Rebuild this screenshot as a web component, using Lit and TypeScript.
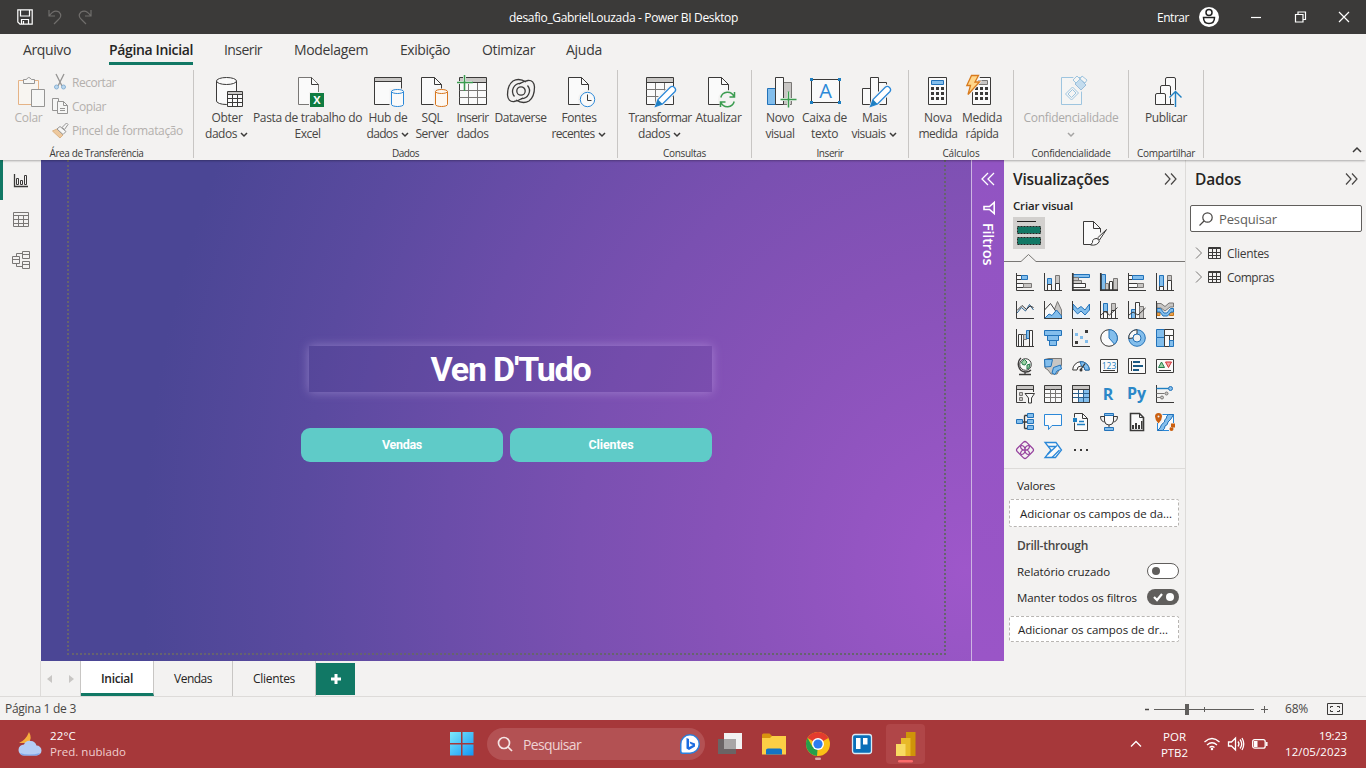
import { LitElement, html, svg, css } from "lit";
import { customElement, property } from "lit/decorators.js";

/** A run of text whose tracking is adjusted so that it takes `w` pixels. */
@customElement("fit-text")
class FitText extends LitElement {
  @property() t = "";
  @property({ type: Number }) w = 0;
  static styles = css`
    :host { display: inline-block; white-space: pre; }
  `;
  render() { return html`<span>${this.t}</span>`; }
  updated() {
    const s = this.renderRoot.querySelector("span") as HTMLElement;
    s.style.letterSpacing = "0px";
    const n = s.getBoundingClientRect().width;
    if (this.w) s.style.letterSpacing = (this.w - n) / this.t.length + "px";
  }
}

const T = (t: string, w: number, c = "") => html`<fit-text class=${c} .t=${t} .w=${w}></fit-text>`;
const R = (x: number, y: number, w: number, h: number) => `M${x} ${y}h${w}v${h}h${-w}z`;
const C = (x: number, y: number, r: number) => `M${x - r} ${y}a${r} ${r} 0 1 0 ${2 * r} 0a${r} ${r} 0 1 0 ${-2 * r} 0z`;

type Shape = [string, string];
const draw = (shapes: Shape[]) => shapes.map(([c, d]) => svg`<path class=${c} d=${d}></path>`);
const ico = (w: number, h: number, shapes: Shape[], extra: unknown = "") =>
  html`<svg width=${w} height=${h} viewBox="0 0 ${w} ${h}">${draw(shapes)}${extra}</svg>`;

const FILE: Shape = ["w", "M5.5 4.5H18.5L25.5 11.5V31.5H5.5z"];
const FOLD: Shape = ["d", "M18.5 4.5V11.5H25.5"];
const cyl = (c: string, x: number, y: number, w: number, h: number, ry: number): Shape[] => [
  [c, `M${x} ${y + ry}V${y + h - ry}A${w / 2} ${ry} 0 0 0 ${x + w} ${y + h - ry}V${y + ry}`],
  [c, `M${x} ${y + ry}A${w / 2} ${ry} 0 0 1 ${x + w} ${y + ry}A${w / 2} ${ry} 0 0 1 ${x} ${y + ry}z`],
];
const PENCIL: Shape[] = [
  ["halo", "M12 33L14 26L27 13L32 18L19 31z"],
  ["pb", "M11.5 33.5L14 26.5L26.5 14Q28.5 12.5 30.5 14.5Q32.5 16.5 31 18.5L18.5 31z"],
  ["bf", "M11.5 33.5L14 26.5L18.5 31z"],
];
const dots = (x: number, y: number) =>
  [0, 1, 2].flatMap((i) => [0, 1, 2].map((j) => R(x + i * 5, y + j * 5, 3, 3))).join("");

const RI: Record<string, unknown> = {
  obter: ico(32, 36, [...cyl("w", 5.5, 4.5, 20, 27, 3.5), ["halo", R(17.5, 19.5, 13, 13)], ["w", R(16.5, 18.5, 15, 15)], ["gf", R(17, 19, 14, 2)], ["d", "M16.5 21.5h15M16.5 25.5h15M16.5 29.5h15M21.5 21.5v12M26.5 21.5v12"]]),
  excel: ico(32, 36, [["wg", "M6.5 4.5H19.5L26.5 11.5V31.5H6.5z"], ["d", "M19.5 4.5V11.5H26.5"], ["halo", R(18.5, 20.5, 13, 13)], ["xl", R(18, 20, 14, 14)]], svg`<text class="xt" x="25" y="31">X</text>`),
  hub: ico(32, 36, [["w", R(2.5, 4.5, 27, 27)], ["gf", R(3, 5, 26, 3)], ["d", "M2.5 8.5h27"], ["halo", R(19, 17, 13, 18)], ...cyl("bl", 19.5, 16.5, 12, 17, 2)]),
  sql: ico(32, 36, [FILE, FOLD, ["halo", R(19, 17, 13, 18)], ...cyl("or", 19.5, 16.5, 12, 17, 2)]),
  inserir: ico(32, 36, [["w", R(2.5, 4.5, 27, 27)], ["gf", R(3, 5, 26, 4)], ["dg", "M2.5 17.5h27M2.5 24.5h27M11.5 9v22M20.5 9v22"], ["d", "M2.5 9.5h27"], ["halo", "M7.5 3v14M1 9.5h14"], ["gr", "M7.5 2v16M0 9.5h16"]]),
  dataverse: ico(32, 36, [
    ["m", "M21 9Q14 4.5 8 8Q2.5 12 2.5 22Q3 29 9 28.5Q13 28 18 25"],
    ["m", "M11 27Q18 31.5 24 28Q29.5 24 29.5 14Q29 7 23 7.5Q19 8 14 11"],
    ["m", C(16, 18, 4.2)], ["m", "M22.5 12.5A8 8 0 0 1 16 25.7M9.5 23.5A8 8 0 0 1 16 10.3"]]),
  fontes: ico(32, 36, [FILE, FOLD, ["halo", C(24.5, 26.5, 8)], ["bl", C(24.5, 26.5, 7.2)], ["d", "M24.5 21.5V27.5H28.5"]]),
  transformar: ico(32, 36, [["w", R(2.5, 4.5, 27, 27)], ["gf", R(3, 5, 26, 4)], ["dg", "M2.5 16.5h27M2.5 23.5h27M11.5 9v22M20.5 9v22"], ["d", "M2.5 9.5h27"], ...PENCIL]),
  atualizar: ico(32, 36, [FILE, FOLD, ["halo", C(24.5, 26.5, 8)], ["gr", "M17.8 24.5A7 7 0 0 1 31 23.5M31.5 19v5h-5M31.2 28.5A7 7 0 0 1 18 29.5M17.5 34v-5h5"]]),
  novo: ico(32, 36, [["b", R(3.5, 15.5, 8, 16)], ["g", R(19.5, 9.5, 8, 22)], ["w", R(11.5, 4.5, 8, 27)], ["halo", "M24.5 19v15M18 26.5h14"], ["gr", "M24.5 18.5v16M16.5 26.5h16"]]),
  caixa: ico(34, 36, [["w", R(3.5, 6.5, 28, 23)], ["bf", R(2, 5, 3, 3) + R(30, 5, 3, 3) + R(2, 28, 3, 3) + R(30, 28, 3, 3)]], svg`<text class="at" x="17.5" y="25">A</text>`),
  mais: ico(32, 36, [["w", R(3.5, 15.5, 8, 16)], ["w", R(19.5, 9.5, 8, 22)], ["w", R(11.5, 4.5, 8, 27)], ...PENCIL]),
  nova: ico(32, 36, [["w", R(6.5, 4.5, 18, 27)], ["b", R(9.5, 7.5, 12, 4)], ["k", dots(9, 14)]]),
  rapida: ico(32, 36, [["w", R(6.5, 4.5, 18, 27)], ["g", R(9.5, 7.5, 12, 4)], ["k", dots(9, 14)], ["halo", "M5 3h8l-4 6h4L3 21l2-8H1z"], ["bolt", "M5.5 2.5h7l-3.5 6.5h4.5L2 21.5l2.5-9H.8z"]]),
  conf: ico(32, 36, [["w", R(6.5, 4.5, 20, 27)], ["halo", "M20 5l10 8l-4 4l-10-8z"], ["w", "M10.5 21l7-7 6 6-7 7zM13 21l4.5-4.5 3.5 3.5-4.5 4.5z"], ["b", "M20 11l5-5 6 6-5 5z"], ["w", "M18 7l4-4 3 3-4 4zM27 3l5 4-2 3-5-4z"]]),
  publicar: ico(32, 36, [["w", "M15.5 31.5V6q0-1.5 1.5-1.5h7q1.5 0 1.5 1.5V31.5z"], ["w", "M10.5 31.5V14q0-1.5 1.5-1.5h7q1.5 0 1.5 1.5V31.5z"], ["w", "M5.5 31.5V22q0-1.5 1.5-1.5h7q1.5 0 1.5 1.5V31.5z"], ["halo", "M25.5 20v13M20 25l5.5-6 5.5 6"], ["bs", "M25.5 34V19M19.5 24.5l6-6 6 6"]]),
};

const AX: Shape = ["d", "M.5 0V17.5H18"];
const GRIDW = (h: string): Shape[] => [["w", R(.5, .5, 17, 17)], ["gf", R(1, 1, 16, 3)], ["d", "M.5 4.5h17"], ["dg", h]];
const VI: unknown[] = [
  ico(18, 18, [["w", R(.5, 2.5, 5, 4)], ["b", R(5.5, 2.5, 6, 4)], ["w", R(.5, 10.5, 7, 4)], ["g", R(7.5, 10.5, 8, 4)], AX]),
  ico(18, 18, [["b", R(3.5, 5.5, 4, 6)], ["w", R(3.5, 11.5, 4, 6)], ["g", R(11.5, 2.5, 4, 8)], ["w", R(11.5, 10.5, 4, 7)], AX]),
  ico(18, 18, [["b", R(.5, 1.5, 17, 3)], ["g", R(.5, 4.5, 6, 3)], ["g", R(.5, 7.5, 9, 3)], ["w", R(.5, 10.5, 13, 4)], ["d2", "M.8 0V17.2H18"]]),
  ico(18, 18, [["b", R(1.5, 1.5, 4, 16)], ["g", R(5.5, 10.5, 3, 7)], ["w", R(9.5, 8.5, 3, 9)], ["g", R(13.5, 5.5, 4, 12)], ["d2", "M.8 0V17.2H18"]]),
  ico(18, 18, [["w", R(.5, 2.5, 4, 4)], ["b", R(4.5, 2.5, 11, 4)], ["w", R(.5, 10.5, 9, 4)], ["g", R(9.5, 10.5, 6, 4)], AX]),
  ico(18, 18, [["b", R(3.5, 2.5, 4, 11)], ["w", R(3.5, 13.5, 4, 4)], ["g", R(11.5, 2.5, 4, 5)], ["w", R(11.5, 7.5, 4, 10)], AX]),
  ico(18, 18, [["bs1", "M1 12L5.5 6.5L9.5 10L13.5 3.5L17.5 9"], ["d", "M1 9.5L6 4.5L10.5 8.5L14 5L17.5 6.5"], AX]),
  ico(18, 18, [["g", "M7 17.5L13.5 .5L17.5 9V17.5z"], ["w", "M.5 17V9L6.5 2.5L13 12V17.5z"], ["b", "M.5 17.5L5 13L8 14.5L12.5 9L17.5 15V17.5z"], AX]),
  ico(18, 18, [["b", "M1 3L5.5 8L9 5.5L13 9L17.5 3V9L13 14L9 10L5.5 13L1 8z"], ["lb", "M1 9l4.5 5L9 11l4 4 4.5-5V17H1z"], AX]),
  ico(18, 18, [["b", R(3.5, 2.5, 4, 8)], ["w", R(3.5, 10.5, 4, 7)], ["g", R(11.5, 2.5, 4, 7)], ["w", R(11.5, 9.5, 4, 8)], ["d", "M1 14L5 10.5L9.5 14L17.5 6.5"], AX]),
  ico(18, 18, [["b", R(3.5, 8.5, 4, 9)], ["w", R(7.5, 1.5, 4, 16)], ["g", R(11.5, 5.5, 4, 12)], ["d", "M1 14L5 11L10 14L17.5 7"], AX]),
  ico(18, 18, [["ora", "M1 11.5h3v3H1zM13.5 11.5h4v3h-4z"], ["g", "M1 2.5h4l4 3 4-3.5h4.5v4H14L9 10 5 7H1z"], ["b", "M1 7.5h3.5L8 12h3l3.5-4.5h3V11H15l-3.5 4H7L4 11H1z"], AX]),
  ico(18, 18, [["w", R(2.5, 5.5, 3, 12)], ["w", R(5.5, 5.5, 2, 12)], ["g", R(7.5, 5.5, 3, 5)], ["b", R(10.5, 1.5, 3, 8)], ["w", R(13.5, 1.5, 3, 16)], AX]),
  ico(18, 18, [["b", R(.5, 1.5, 17, 5)], ["b", R(3.5, 6.5, 11, 5)], ["b", R(5.5, 11.5, 7, 5)]]),
  ico(18, 18, [AX, ["k", R(13, 1, 3, 3) + R(3, 12, 3, 3)], ["lb2", R(3, 4, 3, 3) + R(8, 7, 3, 3) + R(13, 11, 3, 3)]]),
  ico(18, 18, [["w", C(9, 9, 8.3)], ["b", "M9 9V.7A8.3 8.3 0 0 1 14.5 15.2z"]]),
  ico(18, 18, [["b", C(9, 9, 8.3)], ["w", "M9 .7A8.3 8.3 0 0 0 .7 9.5L5 9A4 4 0 0 1 9 5z"], ["bg", C(9, 9, 4)]]),
  ico(18, 18, [["b", R(.5, .5, 8, 8)], ["b", R(.5, 8.5, 8, 9)], ["w", R(8.5, .5, 9, 6)], ["w", R(8.5, 6.5, 5, 11)], ["w", R(13.5, 6.5, 4, 5)], ["b", R(13.5, 11.5, 4, 6)]]),
  ico(18, 18, [["w", C(9.5, 7.5, 5.8)], ["grn", "M5.5 5l3-2.5L11 5 9 8 6.5 7.5zM11 8l3-1-1 4-2 1z"], ["m", "M5 1Q1.5 4 2.5 9Q4 15 10 15Q13 15 15 13M9 15V17M3 17.5h12"]]),
  ico(18, 18, [["g", "M.5 2.5L5 1.5H17.5V8L13 17H7L4 13L1 11z"], ["b", "M.5 2.5H8.5L7 9.5L1 10zM9.5 10.5L16.5 8L17.5 12L13 14L11 17.5L8 16z"]]),
  ico(18, 18, [["w", "M.7 13A8.3 8.3 0 0 1 17.3 13H13A4 4 0 0 0 5 13z"], ["b", "M8 4.7A8.3 8.3 0 0 1 17.3 13H13A4 4 0 0 0 9.5 9z"], ["m", "M8.5 13L13 6.5"], ["k", C(9, 13, 1.5)]]),
  ico(18, 18, [["w", R(.5, 2.5, 17, 13)], ["d", "M3 13.5h12"]], svg`<text class="n123" x="9" y="11.5">123</text>`),
  ico(18, 18, [["w", R(.5, 1.5, 17, 15)], ["d", "M3.5 4v10"], ["bk", R(5, 4, 7, 2) + R(5, 8, 10, 2) + R(5, 12, 6, 2)]]),
  ico(18, 18, [["w", R(.5, 2.5, 17, 13)], ["grn", "M2.5 10.5L5.5 5l3 5.5z"], ["red", "M9.5 5h6l-3 5.5z"], ["d", "M3 13.5h12"]]),
  ico(19, 18, [["d", "M10 17.5H.5V.5H17.5V7"], ["gf", R(1, 1, 16, 3)], ["d", "M.5 4.5h17"], ["g", R(3.5, 7.5, 3, 3)], ["g", R(3.5, 12.5, 3, 3)], ["w", "M9 8.5h9.5L15.5 13V18h-3V13z"]]),
  ico(18, 18, GRIDW("M.5 8.5h17M.5 12.5h17M6.5 4.5v13M11.5 4.5v13")),
  ico(18, 18, [["w", R(.5, .5, 17, 17)], ["lb2", R(12, 4, 5, 13) + R(6, 13, 6, 4)], ["gf", R(1, 1, 16, 3)], ["bs1", "M.5 8.5h17M.5 12.5h17M6.5 4.5v13M11.5 4.5v13"], ["d", "M.5 4.5h17" + R(.5, .5, 17, 17)]]),
  ico(18, 18, [], svg`<text class="rr" x="8" y="15">R</text>`),
  ico(20, 18, [], svg`<text class="rr" x="8.5" y="14">Py</text>`),
  ico(18, 18, [["d", "M.5 0V17.5H18"], ["bs", "M.5 3.5h12"], ["b", C(14.5, 3.5, 2)], ["dg", "M.5 8.5h8M.5 12.5h4"], ["g", C(10.5, 8.5, 1.5)], ["g", C(6, 12.5, 1.5)]]),
  ico(18, 18, [["m", "M5 9h6M8.5 2.5V15.5M8.5 2.5h3M8.5 15.5h3"], ["b", R(.5, 6.5, 6, 4)], ["b", R(11.5, .5, 6, 4)], ["b", R(11.5, 6.5, 6, 4)], ["b", R(11.5, 12.5, 6, 4)]]),
  ico(18, 18, [["bl", "M.5 1.5h17v11H8L4.5 16.5V12.5H.5z"]]),
  ico(18, 18, [["w", "M2.5 .5h8l5 5v12H2.5z"], ["d", "M10.5 .5v5h5"], ["halo", R(2, 6, 2, 2)], ["bf", R(1, 5, 4, 4)], ["bs", "M7 8.5h5M5 11.5h8"]]),
  ico(18, 18, [["d", "M4.5 3.5H.5Q.5 9 5.5 9M13.5 3.5h4Q17.5 9 12.5 9M9 11v4"], ["w", "M4.5 1.5h9V8Q13 12 9 12Q5 12 4.5 8z"], ["b", R(4.5, .5, 9, 2)], ["b", R(4.5, 14.5, 9, 3)]]),
  ico(18, 18, [["w2", "M2.5 .5h9l4 4v13h-13z"], ["d", "M11.5 .5v4h4"], ["k", R(4, 12, 2, 4) + R(7, 10, 2, 6) + R(10, 12, 2, 4) + R(13, 8, 1.5, 8)]]),
  ico(18, 18, [["bl", R(1.5, 1.5, 16, 16)], ["b", "M17.5 1.5h-5Q10 3 10.5 5Q8 7 8.5 9Q5 11 4 15L1.5 17.5h5Q9 16 9 13Q12 12 12 9Q15 7 17.5 1.5z"], ["gap", R(-1, 0, 7.5, 10) + R(13, 10, 6, 9)], ["orf", "M-1 3.5a3.5 3.5 0 0 1 7 0Q6 7 2.5 10.5Q-1 7-1 3.5z" + R(15, 10.5, 4, 4) + C(15.5, 16, 2)], ["lb", C(2.5, 3.5, 1)]]),
  ico(18, 18, [["pu", "M7.5 1.2Q9-.2 10.5 1.2L16.8 7.5Q18.2 9 16.8 10.5L10.5 16.8Q9 18.2 7.5 16.8L1.2 10.5Q-.2 9 1.2 7.5z"], ["pu", "M5 4.5Q9 4.5 9 9Q9 13.5 13 13.5M13 4.5Q9 4.5 9 9Q9 13.5 5 13.5M4.5 5Q4.5 9 9 9Q13.5 9 13.5 13M13.5 5Q13.5 9 9 9Q4.5 9 4.5 13"]]),
  ico(18, 18, [["bl2", "M1 1.5h11L17.5 9L11.5 16.5H1L7 9z"], ["bl2", "M4 5.5H11.5M3.5 13.5L13 4.5M8 16.5L15.5 9"]]),
  ico(18, 18, [["k", R(2, 8, 2, 2) + R(8, 8, 2, 2) + R(14, 8, 2, 2)]]),
];

const rb = (w: number, icon: string, a: [string, number], b?: [string, number], chev = false, off = false) => html`
  <div class="rb ${off ? "off" : ""}" style="width:${w}px">
    ${RI[icon]}
    <div class="ln">${T(a[0], a[1])}</div>
    <div class="ln">${b ? T(b[0], b[1]) : ""}${chev ? ico(8, 8, [["c2", "M1 3l3 3 3-3"]]) : ""}</div>
  </div>`;
const group = (w: number, pad: number, label: [string, number], body: unknown) => html`
  <div class="grp" style="width:${w}px">
    <div class="gb" style="padding-left:${pad}px">${body}</div>
    <div class="gl">${T(label[0], label[1])}</div>
  </div>`;

const MENU: [string, number, number][] = [["Arquivo", 48, 38], ["Página Inicial", 84, 31], ["Inserir", 38, 32], ["Modelagem", 74, 32], ["Exibição", 50, 32], ["Otimizar", 53, 31], ["Ajuda", 36, 0]];

@customElement("app-root")
class AppRoot extends LitElement {
  static styles = css`
    :host { display: flex; flex-direction: column; width: 1366px; height: 768px; overflow: hidden; background: #f3f2f1; color: #252423; font: 12px "Open Sans", "Noto Sans", sans-serif; }
    * { box-sizing: border-box; }
    svg { display: block; flex: none; overflow: visible; fill: none; }
    .d, .dg, .m, .w, .w2, .wg { stroke: #3b3a39; }
    .w, .w2, .wg { fill: #fafafa; } .wg { stroke: #797775; } .dg { stroke: #797775; } .w2 { stroke-width: 1.6; }
    .m { stroke-width: 1.3; } .d2 { stroke: #3b3a39; stroke-width: 1.7; }
    .gf { fill: #c8c6c4; } .g { fill: #c8c6c4; stroke: #797775; }
    .b { fill: #83beec; stroke: #2272b9; } .bl, .bl2 { fill: #fafafa; stroke: #2b88d8; } .bl2 { stroke-width: 1.3; }
    .bf { fill: #1e7fc1; } .bs, .bs1 { stroke: #1e7fc1; } .bs { stroke-width: 1.4; } .bs1 { stroke: #2b5f8c; }
    .bk { fill: #1b5a85; } .lb { fill: #eaf3fb; } .lb2 { fill: #83beec; }
    .bg { fill: #f3f2f1; stroke: #2272b9; } .gap { fill: #f3f2f1; }
    .pb { fill: #fff; stroke: #2b88d8; stroke-width: 1.3; }
    .halo { fill: #f3f2f1; stroke: #f3f2f1; stroke-width: 3; }
    .or { fill: #fdf8f2; stroke: #d8761d; } .ora { fill: #e8a04c; stroke: #c87619; } .orf { fill: #ca5f10; }
    .gr { stroke: #3b9c50; stroke-width: 1.5; } .grn { fill: #9cd3a5; stroke: #237b4b; } .red { fill: #f3a3a3; stroke: #d13438; }
    .xl { fill: #107c41; } .k { fill: #3b3a39; }
    .bolt { fill: #ffd68a; stroke: #d87a1c; stroke-width: 1.3; }
    .pu { stroke: #96429e; stroke-width: 1.2; }
    .c2 { stroke: #3b3a39; stroke-width: 1.5; } .c1 { stroke: #484644; stroke-width: 1.2; }
    .xt { fill: #fff; font: 700 11px "Open Sans"; text-anchor: middle; }
    .at { fill: #2b88d8; font: 20px "Open Sans"; text-anchor: middle; }
    .n123 { fill: #1e7fc1; font: 8.5px "Open Sans"; text-anchor: middle; }
    .rr { fill: #2b88c8; font: 700 16px "Open Sans"; text-anchor: middle; }

    .title { height: 34px; background: #3b3a39; color: #fff; display: flex; align-items: center; flex: none; padding: 0 16px 0 17px; }
    .title .q { display: flex; gap: 14px; width: 492px; flex: none; }
    .title .name { width: 648px; flex: none; }
    .win { display: flex; align-items: center; flex: none; }
    .ws { stroke: #fff; stroke-width: 1.2; } .wd { stroke: #706e6c; stroke-width: 1.2; }
    .title .av { margin: 0 32px 0 10px; } .title .mn { margin-right: 33px; } .title .rs { margin-right: 32px; }

    .menu { height: 36px; flex: none; display: flex; padding-left: 23px; font-size: 14px; color: #3b3a39; }
    .menu div { height: 31px; line-height: 32px; }
    .menu .on { font-weight: 600; color: #252423; border-bottom: 3px solid #117865; }
    .ribbon { height: 90px; flex: none; display: flex; position: relative; box-shadow: 0 2px 2px -1px rgba(0,0,0,.3); z-index: 2; background: #f3f2f1; }
    .grp { height: 88px; border-right: 1px solid #c8c6c4; display: flex; flex-direction: column; }
    .gb { display: flex; height: 76px; padding-top: 3px; }
    .gl { height: 12px; line-height: 15px; font-size: 10px; text-align: center; color: #3b3a39; }
    .rb { display: flex; flex-direction: column; align-items: center; flex: none; }
    .rb .ln { height: 16px; line-height: 16px; display: flex; align-items: center; gap: 2px; color: #484644; }
    .rb .ln svg { margin: 0 1px; }
    .rb svg + .ln { margin-top: 1px; }
    .off { opacity: .42; }
    .offc .w { stroke: #2b88c8; }
    .clip { display: flex; color: #b3b0ad; height: 72px; }
    .clip .l { width: 31px; display: flex; flex-direction: column; align-items: center; }
    .clip .r { padding-left: 8px; display: flex; flex-direction: column; margin-top: -3px; }
    .clip .r div { height: 24px; display: flex; align-items: center; gap: 4px; }
    .clip svg { opacity: .5; }
    .up { margin: 76px 0 0 148px; }

    .body { flex: 1; display: flex; min-height: 0; }
    .rail { width: 41px; display: flex; flex-direction: column; }
    .rail div { height: 40px; display: flex; align-items: center; padding-left: 9px; border-left: 3px solid transparent; }
    .rail .on { border-color: #117865; }
    .canvas { width: 930px; height: 501px; padding: 0 26px 6px; background: radial-gradient(ellipse 840px 1000px at 925px 410px, #9e57ca 0, #9455c2 13%, #8752b8 30%, #7a50b1 46%, #6b4da9 62%, #5a4a9f 79%, #4b4695 98%); }
    .page { height: 495px; border: 2px dotted #66636f; border-top: 0; padding: 186px 0 0 232px; width: 879px; }
    .hero { width: 403px; height: 46px; margin-left: 8px; background: rgba(70,55,130,.13); box-shadow: 0 0 10px rgba(225,205,255,.38); color: #fff; font: 700 34px/47px Roboto, sans-serif; text-align: center; }
    .btns { display: flex; gap: 7px; margin-top: 36px; }
    .btns div { width: 202px; height: 34px; border-radius: 9px; background: #5fcbc8; color: #fff; text-align: center; font: 700 12.5px/34px Roboto, sans-serif; }
    .filt { width: 33px; height: 501px; border-left: 1px solid #cdb4e2; background: linear-gradient(#9154c2, #9a55c7); padding: 12px 0 0 9px; display: flex; flex-direction: column; align-items: flex-start; color: #fff; }
    .filt .v { writing-mode: vertical-rl; font-size: 14.5px; font-weight: 600; line-height: 14px; margin-top: 8px; letter-spacing: -.2px; white-space: nowrap; }
    .filt .ff { margin: 15px 0 0 1px; }
    .fw { stroke: #fff; stroke-width: 1.3; } .fw2 { stroke: #fff; stroke-width: 1.6; }

    .viz { width: 182px; border-right: 1px solid #dddbd9; height: 536px; }
    .h { display: flex; justify-content: space-between; align-items: center; height: 38px; padding: 0 8px 0 9px; font-size: 15.5px; font-weight: 600; }
    .cv { padding-left: 9px; height: 19px; line-height: 16px; font-weight: 600; font-size: 11.5px; }
    .modes { display: flex; padding-left: 9px; gap: 37px; height: 37px; }
    .sel { width: 32px; height: 32px; background: #d2d0ce; display: grid; place-items: center; }
    .grid { display: grid; grid-template-columns: repeat(6, 28px); grid-auto-rows: 28px; padding-left: 7px; margin-top: 6px; height: 201px; border-bottom: 1px solid #dddbd9; }
    .grid svg { margin: 5px 0 0 5px; }
    .fld { margin-left: 5px; width: 170px; height: 28px; border: 1px dashed #b8b5b2; border-radius: 2px; background: #fff; line-height: 27px; padding-left: 10px; font-size: 11.5px; }
    .fld.low { height: 26px; margin-top: 6px; line-height: 25px; padding-left: 8px; }
    .lab { height: 30px; line-height: 34px; padding-left: 13px; }
    .row { height: 26px; display: flex; align-items: center; justify-content: space-between; padding: 0 6px 0 13px; }
    .vb { font-size: 11.5px; }
    .dt { height: 31px; font-weight: 600; color: #484644; line-height: 38px; }

    .data { width: 180px; }
    .srch { margin: 7px 4px 9px; height: 27px; border: 1px solid #605e5c; border-radius: 2px; background: #fff; display: flex; align-items: center; gap: 6px; padding-left: 8px; font-size: 13px; color: #605e5c; }
    .tr { display: flex; align-items: center; height: 24px; padding-left: 9px; gap: 5px; color: #3b3a39; }

    .tabs { height: 35px; flex: none; margin-top: -35px; display: flex; width: 1004px; padding-left: 40px; z-index: 1; }
    .tabs div { height: 35px; display: grid; place-items: center; border-right: 1px solid #c8c6c4; }
    .ar { width: 41px; border-left: 1px solid #dddbd9; }
    .tabs .on { width: 73px; background: #fff; border-bottom: 3px solid #117865; font-weight: 600; padding-top: 3px; }
    .tabs .add { width: 39px; height: 32px; margin-top: 2px; background: #117865; border: 0; }
    .af { fill: #c8c6c4; }
    .stat { height: 24px; flex: none; border-top: 1px solid #dddbd9; display: flex; align-items: center; padding: 0 23px 0 5px; color: #484644; justify-content: space-between; }
    .stat .z { display: flex; align-items: center; }
    .stat .z fit-text { margin: 0 19px 0 16px; }

    .task { height: 48px; flex: none; background: #a6383a; color: #fff; display: flex; align-items: center; padding: 0 19px 0 17px; font-size: 11.5px; }
    .wx { width: 433px; display: flex; align-items: center; gap: 6px; line-height: 16px; }
    .wx div, .lg, .clk { display: flex; flex-direction: column; }
    .wx .s { color: #f0cfcf; }
    .sb { margin: 0 13px 0 13px; width: 218px; height: 32px; border-radius: 16px; background: #b35153; display: flex; align-items: center; padding: 0 5px 0 10px; font-size: 14px; color: #efd3d3; }
    .sb fit-text { margin: 0 0 0 11px; flex: 1; }
    .apps { display: flex; gap: 20px; align-items: center; width: 412px; }
    .pbi { width: 39px; height: 40px; margin-left: -8px; border-radius: 4px; background: #b04648; display: grid; place-items: center; }
    .lg { align-items: center; line-height: 16px; margin: 1px 16px 0 19px; }
    .clk { align-items: flex-end; line-height: 16px; margin-left: auto; }
    .tri { display: flex; gap: 8px; align-items: center; }
  `;

  private ribbon() {
    return html`<div class="ribbon">
      ${group(194, 13, ["Área de Transferência", 94], html`<div class="clip">
        <div class="l">${ico(32, 36, [["or", "M5.5 7.5h20v24h-20z"], ["halo", R(20, 18, 11, 15)], ["w", "M10.5 10.5v-4h3q2-4 5 0h3v4z"], ["w", R(18.5, 16.5, 13, 17)]])}<div class="ln">${T("Colar", 28)}</div></div>
        <div class="r">
          <div>${ico(16, 18, [["m", "M4 1l6 12M12 1L6 13"], ["b", C(4.5, 14, 2)], ["b", C(11.5, 14, 2)]])}${T("Recortar", 44)}</div>
          <div>${ico(16, 18, [["w", "M.5 1.5h6v12h-6z"], ["w", "M5.5 4.5h6l4 4v8h-10z"], ["d", "M11.5 4.5v4h4M8 11.5h5M8 13.5h5"]])}${T("Copiar", 34)}</div>
          <div>${ico(16, 18, [["ora", "M.5 10L5 8l6 6-3 3z"], ["w", "M5 8l3-2.5 6 5L11 13.5zM10 6.5L14.5 2l1.5 1.5L12.5 8.5z"]])}${T("Pincel de formatação", 111)}</div>
        </div></div>`)}
      ${group(424, 9, ["Dados", 27], [
        rb(48, "obter", ["Obter", 31], ["dados", 32], true),
        rb(113, "excel", ["Pasta de trabalho do", 109], ["Excel", 26]),
        rb(48, "hub", ["Hub de", 39], ["dados", 31], true),
        rb(40, "sql", ["SQL", 21], ["Server", 33]),
        rb(41, "inserir", ["Inserir", 32], ["dados", 32]),
        rb(55, "dataverse", ["Dataverse", 52]),
        rb(62, "fontes", ["Fontes", 35], ["recentes", 43], true)])}
      ${group(134, 9, ["Consultas", 43], [
        rb(66, "transformar", ["Transformar", 63], ["dados", 32], true),
        rb(51, "atualizar", ["Atualizar", 46])])}
      ${group(157, 11, ["Inserir", 27], [
        rb(34, "novo", ["Novo", 28], ["visual", 29]),
        rb(55, "caixa", ["Caixa de", 45], ["texto", 27]),
        rb(45, "mais", ["Mais", 25], ["visuais", 34], true)])}
      ${group(105, 7, ["Cálculos", 37], [
        rb(44, "nova", ["Nova", 28], ["medida", 39]),
        rb(44, "rapida", ["Medida", 40], ["rápida", 33])])}
      <div class="offc">${group(115, 7, ["Confidencialidade", 79], rb(100, "conf", ["Confidencialidade", 95], undefined, true, true))}</div>
      ${group(75, 11, ["Compartilhar", 58], rb(52, "publicar", ["Publicar", 42]))}
      <div class="up">${ico(10, 8, [["c2", "M1 6l4-4 4 4"]])}</div>
    </div>`;
  }

  render() {
    return html`
      <div class="title">
        <div class="q">
          ${ico(16, 16, [["ws", "M.8 .8h14.4v14.4H3L.8 13z"], ["ws", "M3.5 1v6h9V1M4.5 15v-4.5h7V15M6.5 12v3"]])}
          ${ico(16, 16, [["wd", "M2 1v6h6M2.5 6.5Q7 0 12 3Q16 7 11 11L7 15"]])}
          ${ico(16, 16, [["wd", "M14 1v6H8M13.5 6.5Q9 0 4 3Q0 7 5 11L9 15"]])}
        </div>
        <div class="name">${T("desafio_GabrielLouzada - Power BI Desktop", 229)}</div>
        <div class="win">
          ${T("Entrar", 32)}
          <svg class="av" width="20" height="20"><circle cx="10" cy="10" r="10" fill="#fff"></circle><circle cx="10" cy="5.5" r="3" stroke="#222" stroke-width="1.5"></circle><path d="M4.5 10.5h11q0 6-5.5 6t-5.5-6z" stroke="#222" stroke-width="1.5"></path></svg>
          <div class="mn">${ico(11, 10, [["ws", "M0 5.5h10"]])}</div>
          <div class="rs">${ico(11, 12, [["ws", "M.5 3.5h7.5v7.5H.5zM3 3.5V1h7.5v7.5H8"]])}</div>
          ${ico(12, 12, [["ws", "M1 1l10 10M11 1L1 11"]])}
        </div>
      </div>
      <div class="menu">${MENU.map(([t, w, g], i) => html`<div class=${i === 1 ? "on" : ""} style="margin-right:${g}px">${T(t, w)}</div>`)}</div>
      ${this.ribbon()}
      <div class="body">
        <div class="rail">
          <div class="on">${ico(18, 18, [["m", "M2.5 3V15.5H16"], ["d", R(4.5, 7.5, 2, 6) + R(8.5, 9.5, 2, 4) + R(12.5, 4.5, 2, 9)]])}</div>
          <div>${ico(18, 18, [["dg", R(1.5, 1.5, 15, 14) + "M1.5 4.5h15M1.5 8.5h15M1.5 12.5h15M6.5 4.5v11M11.5 4.5v11"]])}</div>
          <div>${ico(18, 18, [["dg", R(.5, 5.5, 7, 7) + R(10.5, .5, 7, 7) + R(10.5, 10.5, 7, 7) + "M.5 8.5h7M10.5 3.5h7M10.5 13.5h7M4.5 5.5v-3h6M4.5 12.5v3h6"]])}</div>
        </div>
        <div class="canvas"><div class="page">
          <div class="hero">${T("Ven D'Tudo", 160)}</div>
          <div class="btns"><div>${T("Vendas", 40)}</div><div>${T("Clientes", 45)}</div></div>
        </div></div>
        <div class="filt">
          ${ico(14, 14, [["fw", "M7 1L1 7l6 6M13 1L7 7l6 6"]])}
          <svg width="14" height="14" class="ff"><path class="fw2" d="M12.2 1.5v11L7.5 8.5H2v-3h5.500z"></path></svg>
          <div class="v">Filtros</div>
        </div>
        <div class="viz">
          <div class="h">${T("Visualizações", 96)}${ico(13, 12, [["c1", "M1 .5l5 5.5-5 5.5M7 .5l5 5.5-5 5.5"]])}</div>
          <div class="cv">${T("Criar visual", 60)}</div>
          <div class="modes">
            <div class="sel"><svg width="24" height="26"><path d="M0 1.5h19" stroke="#252423"></path><rect x=".5" y="6.5" width="23" height="7" fill="#117865" stroke="#252423" stroke-dasharray="2 1"></rect><rect x=".5" y="17.5" width="23" height="7" fill="#117865" stroke="#252423" stroke-dasharray="2 1"></rect></svg></div>
            ${ico(26, 32, [["w", "M12 27.5H1.5V4.5h10l7 7v4"], ["d", "M11.5 4.5v7h7"], ["halo", "M23 14L14 23"], ["w", "M24.5 12.5l-9 8.5 2 2zM15 21.5q-5 0-4.5 4l-2 2.5q7 1 9-4z"]])}
          </div>
          ${ico(181, 8, [["dg", "M0 7.5h17l7.5-7 7.5 7h149"]])}
          <div class="grid">${VI}</div>
          <div class="lab vb">${T("Valores", 38)}</div>
          <div class="fld">${T("Adicionar os campos de da...", 152)}</div>
          <div class="lab dt">${T("Drill-through", 71)}</div>
          <div class="row vb">${T("Relatório cruzado", 93)}<svg width="32" height="16"><rect x=".5" y=".5" width="31" height="15" rx="7.5" fill="#fff" stroke="#605e5c"></rect><circle cx="9" cy="8" r="4" fill="#605e5c"></circle></svg></div>
          <div class="row vb">${T("Manter todos os filtros", 120)}<svg width="32" height="16"><rect width="32" height="16" rx="8" fill="#605e5c"></rect><circle cx="23" cy="8" r="4" fill="#fff"></circle><path d="M7 8l3 3 5-6" stroke="#fff" stroke-width="2.2"></path></svg></div>
          <div class="fld low">${T("Adicionar os campos de dr...", 150)}</div>
        </div>
        <div class="data">
          <div class="h">${T("Dados", 46)}${ico(13, 12, [["c1", "M1 .5l5 5.5-5 5.5M7 .5l5 5.5-5 5.5"]])}</div>
          <div class="srch">${ico(14, 14, [["c1", C(8.5, 5.5, 4.7) + "M5 9L.5 13.5"]])}${T("Pesquisar", 58)}</div>
          ${[["Clientes", 42], ["Compras", 47]].map(([t, w]) => html`<div class="tr">${ico(8, 12, [["dg", "M1 .5l5.5 5.5-5.5 5.5"]])}${ico(14, 12, [["d", R(.5, .5, 12, 11) + "M.5 1.5h12M.5 5.5h12M.5 8.5h12M4.5 1v10M8.5 1v10"]])}${T(t as string, w as number)}</div>`)}
        </div>
      </div>
      <div class="tabs">
        <div class="ar">${ico(40, 10, [["af", "M11 1v8L6 5zM28 1v8l5-4z"]])}</div>
        <div class="on">${T("Inicial", 32)}</div>
        <div style="width:79px">${T("Vendas", 38)}</div>
        <div style="width:83px">${T("Clientes", 42)}</div>
        <div class="add"><svg width="12" height="12"><path d="M6 1v10M1 6h10" stroke="#fff" stroke-width="3"></path></svg></div>
      </div>
      <div class="stat">${T("Página 1 de 3", 71)}
        <div class="z"><svg width="124" height="16"><path d="M0 8.5h4" stroke="#484644" stroke-width="1.5"></path><path d="M9 8.5h100M59.5 6v5M116 8.5h7M119.5 5v7" stroke="#605e5c"></path><rect x="40" y="3" width="4" height="11" fill="#605e5c"></rect></svg>
        ${T("68%", 23)}${ico(16, 12, [["d", R(.5, .5, 15, 11) + "M3.5 5V3.5H6M10 3.5h2.5V5M3.5 7v1.5H6M10 8.5h2.5V7"]])}</div>
      </div>
      <div class="task">
        <div class="wx">
          <svg width="27" height="26"><path d="M12 1q4 7-1 11H2Q9 9 12 1z" fill="#f6ae3c"></path><path d="M7 24.5a5.5 5.5 0 0 1 0-11Q9 9 14 10q4 0 5.500 4.5a5 5 0 0 1 0 10z" fill="#b4cdf5"></path><path d="M3 22q9 3 20 0-1 2.5-4 2.5H7Q4 24.5 3 22z" fill="#7fa6ea"></path></svg>
          <div>${T("22°C", 26)}${T("Pred. nublado", 76, "s")}</div>
        </div>
        <svg width="24" height="24"><defs><linearGradient id="w" x2="1" y2="1" gradientUnits="objectBoundingBox"><stop stop-color="#7eeafc"></stop><stop offset="1" stop-color="#1296f5"></stop></linearGradient></defs><path fill="url(#w)" d="M0 0h11v11H0zM12.5 0h11v11h-11zM0 12.5h11v11H0zM12.5 12.5h11v11h-11z"></path></svg>
        <div class="sb">
          <svg width="15" height="16"><circle cx="7" cy="7" r="5.5" stroke="#f5e4e4" stroke-width="1.7"></circle><path d="M11 11l4 4" stroke="#f5e4e4" stroke-width="1.7"></path></svg>
          ${T("Pesquisar", 58)}
          <svg width="20" height="20"><path d="M10 0a10 10 0 1 1 0 20H2q-2 0-2-2v-8A10 10 0 0 1 10 0z" fill="#2a7fdc"></path><path d="M10 1.5a8.5 8.5 0 1 1 0 17H3q-1.5 0-1.5-1.5v-7A8.5 8.5 0 0 1 10 1.5z" fill="#fff"></path><path d="M6.5 4l2.5 1v8l4-2-2.5-1-1-2.5 5.5 2v3L9 16l-2.5-1.5z" fill="#1b6ce0"></path></svg>
        </div>
        <div class="apps">
          <svg width="24" height="24"><path d="M6 1h18v16H6z" fill="#f2f2f2"></path><path d="M0 7h18v15H0z" fill="#6b6465"></path><path d="M6 7h12v10H6z" fill="#a9a6a6"></path></svg>
          <svg width="24" height="24"><path d="M0 3q0-1.5 1.5-1.5h6L10 4v4H0z" fill="#d9930e"></path><path d="M0 6h8l2-2h14v18.5H0z" fill="#fbcf45"></path><path d="M4 22.5V18q0-1.5 2-1.5h12q2 0 2 1.5v4.5z" fill="#1273c4"></path></svg>
          <svg width="24" height="32"><g transform="translate(0 4)"><circle cx="12" cy="12" r="12" fill="#fbc116"></circle><path d="M12 12L1.6 6A12 12 0 0 1 22.4 6z" fill="#e33b2e"></path><path d="M12 12H12l-1 12A12 12 0 0 1 1.6 6l5 9z" fill="#269f4b"></path><circle cx="12" cy="12" r="6" fill="#fff"></circle><circle cx="12" cy="12" r="4.6" fill="#2d7cf0"></circle></g><rect x="9" y="29.5" width="6" height="2.5" rx="1.2" fill="#dca9a9"></rect></svg>
          <svg width="24" height="22"><rect x="2.5" y="1.5" width="19" height="19" rx="2.5" fill="#0a6fb8" stroke="#dbeaf5" stroke-width="1.3"></rect><rect x="6" y="5" width="4.5" height="11" fill="#fff"></rect><rect x="13" y="5" width="4.5" height="6.5" fill="#fff"></rect></svg>
          <div class="pbi"><svg width="20" height="36"><path d="M10 6h9.5v24H10z" fill="#cf9409"></path><path d="M5 12h9.5v18H5z" fill="#e8b928"></path><path d="M0 18h9.5v12H0z" fill="#f8da62"></path><rect x="2" y="34" width="15" height="2.5" rx="1.2" fill="#fb6a6a"></rect></svg></div>
        </div>
        ${ico(12, 8, [["fw", "M1 6.5l5-5 5 5"]])}
        <div class="lg">${T("POR", 23)}${T("PTB2", 27)}</div>
        <div class="tri">
          ${ico(16, 14, [["fw", "M.5 5Q8-2 15.5 5M3 8q5-4.5 10 0M5.5 10.5q2.5-2 5 0"], ["fw", C(8, 12, .6)]])}
          ${ico(16, 14, [["fw", "M.5 5h3l4-4v12l-4-4h-3zM10 4.5q2 2.5 0 5M12 2.5q3.5 4.5 0 9M14 1q3.5 6 0 12"]])}
          <svg width="16" height="12"><rect x=".7" y="1.7" width="12.5" height="8.5" rx="2" class="fw"></rect><rect x="2" y="3" width="3.5" height="6" fill="#fff"></rect><path d="M14.8 4v4" stroke="#fff" stroke-width="1.5"></path></svg>
        </div>
        <div class="clk">${T("19:23", 28)}${T("12/05/2023", 62)}</div>
      </div>`;
  }
}
